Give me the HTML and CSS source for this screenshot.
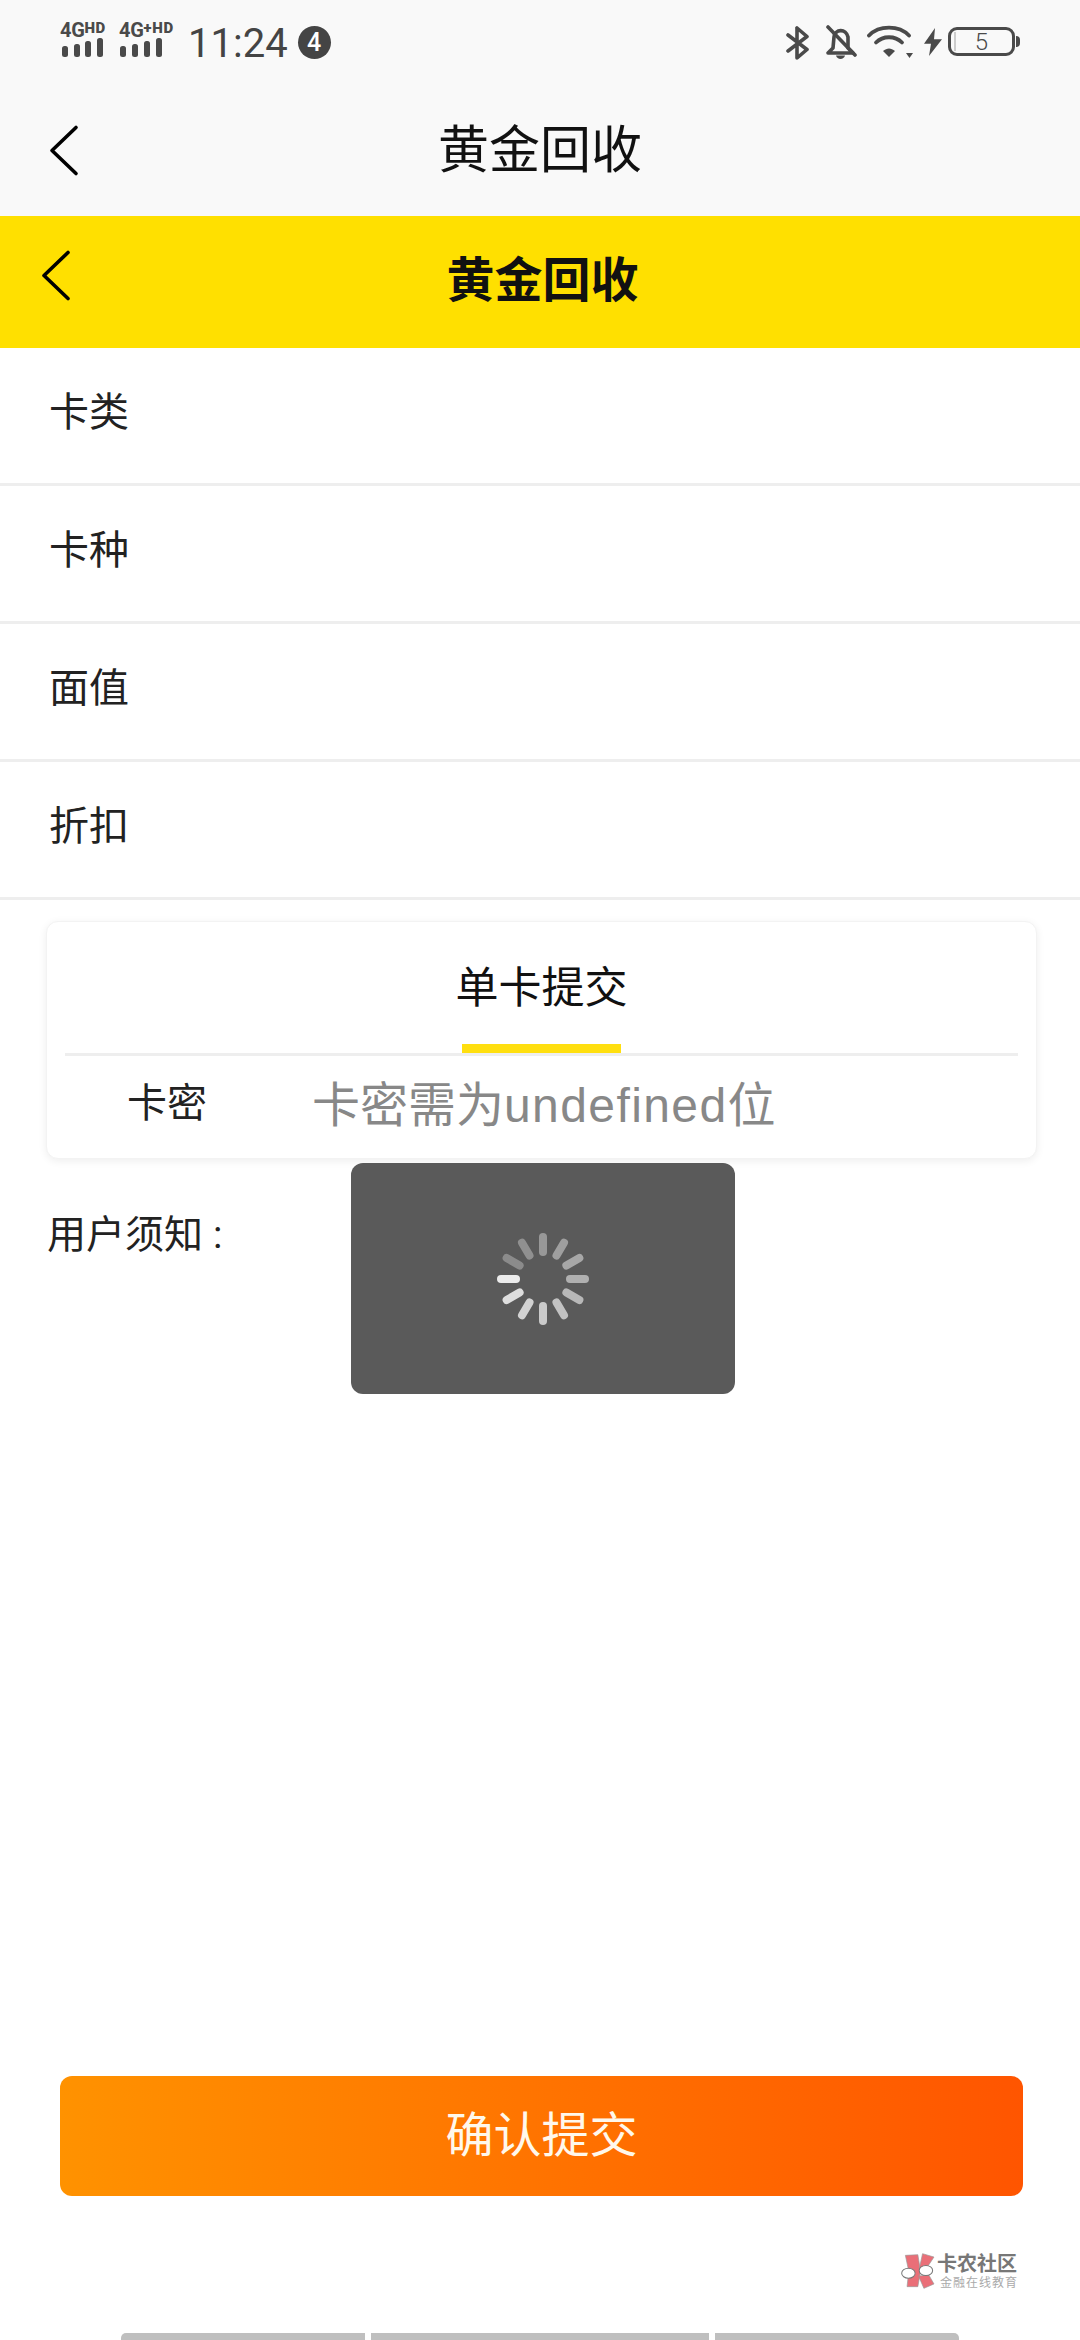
FILE: index.html
```html
<!DOCTYPE html>
<html lang="zh-CN">
<head>
<meta charset="utf-8">
<title>黄金回收</title>
<link rel="stylesheet" href="styles.css">
</head>
<body>
<div class="page">
  <header class="system-top">
    <div class="status">
      <div class="status-left">
        <div class="net net-a">
          <div class="net-label"><span class="net-big">4G</span><span class="net-small">HD</span></div>
          <svg class="net-bars" width="45" height="20" viewBox="0 0 45 20"><rect x="2" y="9" width="6" height="11" rx="2.500"/><rect x="14" y="7" width="6" height="13" rx="2.500"/><rect x="25" y="4" width="6" height="16" rx="2.500"/><rect x="37" y="1" width="6" height="19" rx="2.500"/></svg>
        </div>
        <div class="net net-b">
          <div class="net-label"><span class="net-big">4G</span><span class="net-small net-plus">+HD</span></div>
          <svg class="net-bars" width="45" height="20" viewBox="0 0 45 20"><rect x="1" y="9" width="6" height="11" rx="2.500"/><rect x="13" y="7" width="6" height="13" rx="2.500"/><rect x="25" y="4" width="6" height="16" rx="2.500"/><rect x="37" y="1" width="6" height="19" rx="2.500"/></svg>
        </div>
        <span class="clock">11:24</span>
        <span class="badge">4</span>
      </div>
      <div class="status-right">
        <svg class="ic-bt" width="24" height="36" viewBox="0 0 24 36" fill="none"><path d="M12 3V33L22 24.500L3 10M12 3L22 11.500L3 26" stroke="#4a4a4a" stroke-width="3.600" stroke-linejoin="round" stroke-linecap="round"/></svg>
        <svg class="ic-bell" width="32" height="36" viewBox="0 0 32 36" fill="none"><path d="M9 12C10 4 21 3 23 12V23L28 28H3L8 23Z" stroke="#4a4a4a" stroke-width="3.600" stroke-linejoin="round"/><path d="M11 30.500C12 35 19 35 20 30.500Z" fill="#4a4a4a"/><path d="M3 2L30 30" stroke="#4a4a4a" stroke-width="3.600" stroke-linecap="round"/></svg>
        <svg class="ic-wifi" width="46" height="34" viewBox="0 0 46 34" fill="none"><path d="M2 10.500C12 0 32 0 42 10.500" stroke="#4a4a4a" stroke-width="3.800" stroke-linecap="round"/><path d="M9 17.500C16 10.500 28 10.500 35 17.500" stroke="#4a4a4a" stroke-width="3.800" stroke-linecap="round"/><path d="M16 26C20 22.500 24 22.500 28 26L22 32Z" fill="#4a4a4a"/><path d="M39 28H46L42.500 33Z" fill="#4a4a4a"/></svg>
        <svg class="ic-bolt" width="18" height="28" viewBox="0 0 18 30" preserveAspectRatio="none"><path d="M11 0L0 17H7L5 30L18 12H10Z" fill="#4a4a4a"/></svg>
        <div class="battery"><span class="battery-fill"></span><span class="battery-num">5</span></div>
      </div>
    </div>
    <div class="app-nav">
      <svg class="arrow" width="32" height="53" viewBox="0 0 32 53" fill="none"><path d="M28 3.500L4 26.500L28 49.500" stroke="#000" stroke-width="3.600" stroke-linecap="round" stroke-linejoin="round"/></svg>
      <h1 class="app-title">黄金回收</h1>
    </div>
  </header>

  <div class="web-nav">
    <svg class="arrow" width="32" height="53" viewBox="0 0 32 53" fill="none"><path d="M28 3.500L4 26.500L28 49.500" stroke="#000" stroke-width="3.600" stroke-linecap="round" stroke-linejoin="round"/></svg>
    <h2 class="web-title">黄金回收</h2>
  </div>

  <ul class="fields">
    <li class="field">卡类</li>
    <li class="field">卡种</li>
    <li class="field">面值</li>
    <li class="field">折扣</li>
  </ul>

  <section class="card">
    <div class="tabs"><span class="tab">单卡提交</span><span class="tab-line"></span></div>
    <div class="pw-row">
      <span class="pw-label">卡密</span>
      <span class="pw-input">卡密需为<span class="pw-latin">undefined</span>位</span>
    </div>
  </section>

  <p class="notice">用户须知<span class="notice-colon">:</span></p>

  <button class="submit" type="button">确认提交</button>

  <div class="home-bars"><span class="bar bar-a"></span><span class="bar bar-b"></span><span class="bar bar-c"></span></div>

  <div class="toast">
    <svg width="100" height="100" viewBox="-50 -50 100 100" stroke="#fff" stroke-width="8" stroke-linecap="round">
      <g>
        <line x1="-42" y1="0" x2="-27" y2="0" stroke-opacity=".88"/>
        <line x1="-42" y1="0" x2="-27" y2="0" stroke-opacity=".8" transform="rotate(-30)"/>
        <line x1="-42" y1="0" x2="-27" y2="0" stroke-opacity=".73" transform="rotate(-60)"/>
        <line x1="-42" y1="0" x2="-27" y2="0" stroke-opacity=".68" transform="rotate(-90)"/>
        <line x1="-42" y1="0" x2="-27" y2="0" stroke-opacity=".63" transform="rotate(-120)"/>
        <line x1="-42" y1="0" x2="-27" y2="0" stroke-opacity=".57" transform="rotate(-150)"/>
        <line x1="-42" y1="0" x2="-27" y2="0" stroke-opacity=".52" transform="rotate(-180)"/>
        <line x1="-42" y1="0" x2="-27" y2="0" stroke-opacity=".47" transform="rotate(-210)"/>
        <line x1="-42" y1="0" x2="-27" y2="0" stroke-opacity=".42" transform="rotate(-240)"/>
        <line x1="-42" y1="0" x2="-27" y2="0" stroke-opacity=".38" transform="rotate(-270)"/>
        <line x1="-42" y1="0" x2="-27" y2="0" stroke-opacity=".33" transform="rotate(-300)"/>
        <line x1="-42" y1="0" x2="-27" y2="0" stroke-opacity=".3" transform="rotate(-330)"/>
      </g>
    </svg>
  </div>

  <div class="watermark">
    <svg width="36" height="37" viewBox="360 155 105 110">
      <path d="M375 165L412 163L420 212L412 258L380 258L385 212Z" fill="#ea6f78" stroke="#999" stroke-width="2"/>
      <path d="M426 160L460 170L440 200L416 206Z" fill="#ea6f78" stroke="#999" stroke-width="2"/>
      <path d="M414 226L445 224L460 250L430 263Z" fill="#ea6f78" stroke="#999" stroke-width="2"/>
      <ellipse cx="384" cy="218" rx="20" ry="15" fill="#fff" stroke="#777" stroke-width="3"/>
      <ellipse cx="436" cy="210" rx="20" ry="15" fill="#fff" stroke="#777" stroke-width="3"/>
    </svg>
    <div class="wm-text">
      <span class="wm-main">卡农社区</span>
      <span class="wm-sub">金融在线教育</span>
    </div>
  </div>
</div>
</body>
</html>
```

FILE: styles.css
```css
* { box-sizing: border-box; }
html, body { margin: 0; padding: 0; background: #fff; }
body { font-family: Roboto, "Noto Sans CJK SC", sans-serif; color: #111; }
h1, h2, p, ul { margin: 0; padding: 0; }
ul { list-style: none; }

.page {
  position: relative;
  width: 1080px;
  height: 2340px;
  overflow: hidden;
  display: flex;
  flex-direction: column;
  background: #fff;
}

.system-top { height: 216px; background: #f9f9f9; display: flex; flex-direction: column; }

.status {
  height: 88px;
  display: flex;
  justify-content: space-between;
  align-items: flex-start;
  padding: 22px 60px 0 60px;
  color: #4a4a4a;
}
.status-left { display: flex; align-items: flex-start; }
.status-right { display: flex; align-items: flex-start; padding-top: 3px; }

.net { display: flex; flex-direction: column; width: 45px; margin-right: 14px; }
.net-b { width: 58px; margin-right: 11px; }
.net-label { height: 15px; display: flex; align-items: flex-start; line-height: 17px; white-space: nowrap; font-weight: 700; color: #4a4a4a; }
.net-big { font-size: 20px; letter-spacing: -.3px; }
.net-small { font-size: 15px; line-height: 12px; letter-spacing: .4px; font-weight: 900; }
.net-plus { letter-spacing: .7px; }
.net-bars { fill: #4a4a4a; display: block; }

.clock { font-size: 40px; line-height: 44px; color: #444; }
.badge {
  width: 33px; height: 33px; margin: 4px 0 0 10px;
  border-radius: 50%;
  background: #444; color: #fff;
  font-size: 25px; line-height: 33px; font-weight: 500;
  text-align: center;
}

.ic-bt { margin-right: 16px; }
.ic-bell { margin-right: 10px; }
.ic-wifi { margin-right: 11px; }
.ic-bolt { margin: 3px 6px 0 0; }
.battery {
  position: relative;
  width: 67px; height: 29px; margin: 2px 5px 0 0;
  border: 3px solid #4a4a4a; border-radius: 9px;
  display: flex; align-items: center; justify-content: center;
}
.battery::after {
  content: ""; position: absolute; right: -8px; top: 6px;
  width: 4px; height: 11px; background: #4a4a4a; border-radius: 0 4px 4px 0;
}
.battery-fill { position: absolute; left: 3px; top: 2px; bottom: 2px; width: 2px; background: #ccc; }
.battery-num { font-size: 24px; line-height: 24px; color: #4a4a4a; font-weight: 300; }

.app-nav { flex: 1; position: relative; display: flex; align-items: center; justify-content: center; padding-bottom: 2px; }
.app-nav .arrow { position: absolute; left: 48px; top: 36px; }
.app-title { font-size: 51px; font-weight: 400; line-height: 60px; color: #111; }

.web-nav { height: 132px; background: #ffe000; position: relative; display: flex; align-items: center; justify-content: center; padding: 0 0 3px 5px; }
.web-nav .arrow { position: absolute; left: 40px; top: 33px; }
.web-title { font-size: 48px; font-weight: 700; line-height: 60px; color: #111; }

.field {
  height: 138px;
  border-bottom: 3px solid #eee;
  padding: 0 0 6px 49px;
  display: flex; align-items: center;
  font-size: 40px; line-height: 50px; color: #222;
}

.card {
  margin: 21px 43px 0 46px;
  height: 238px;
  background: #fff;
  border: 1px solid #f3f3f3;
  border-radius: 12px;
  box-shadow: 0 2px 8px rgba(0, 0, 0, .07);
  padding: 0 18px;
}
.tabs {
  height: 134px;
  border-bottom: 3px solid #eee;
  position: relative;
  display: flex; flex-direction: column; align-items: center;
  padding-top: 40px;
}
.tab { font-size: 43px; line-height: 52px; color: #111; }
.tab-line { position: absolute; left: 397px; bottom: 0; width: 159px; height: 9px; background: #ffdf0f; }
.pw-row { display: flex; align-items: center; height: 97px; padding-left: 62px; }
.pw-label { width: 185px; margin-bottom: 2px; font-size: 40px; line-height: 48px; color: #222; }
.pw-input { font-size: 48px; line-height: 56px; margin-top: 2px; color: #888; white-space: nowrap; }
.pw-latin { font-family: "Liberation Sans", sans-serif; letter-spacing: 1.4px; font-variant-ligatures: none; }

.notice { margin: 51px 0 0 47px; font-size: 39px; line-height: 50px; color: #222; }
.notice-colon { margin-left: 10px; }

.submit {
  margin: auto 57px 0 60px;
  height: 120px;
  border: 0; border-radius: 12px;
  background: linear-gradient(90deg, #ff9200, #ff5500);
  color: #fff8ec;
  font-family: inherit; font-size: 48px; line-height: 60px;
  padding: 0;
}

.home-bars { margin: 137px 0 0 121px; display: flex; gap: 6px; height: 7px; }
.bar { display: block; height: 7px; background: #bfbfbf; }
.bar-a { width: 244px; border-radius: 5px 0 0 0; }
.bar-b { width: 338px; }
.bar-c { width: 244px; border-radius: 0 5px 0 0; }

.toast {
  position: absolute; left: 351px; top: 1163px;
  width: 384px; height: 231px;
  background: #5a5a5a; border-radius: 12px;
  display: flex; align-items: center; justify-content: center;
}

.watermark { position: absolute; left: 900px; top: 2252px; display: flex; gap: 1px; align-items: flex-start; }
.wm-text { display: flex; flex-direction: column; padding-top: 2px; }
.wm-main { font-size: 20px; line-height: 20px; font-weight: 700; color: #777; white-space: nowrap; }
.wm-sub { font-size: 12px; line-height: 14px; margin-top: 2px; margin-left: 3px; letter-spacing: 1px; color: #aaa; white-space: nowrap; }
```
